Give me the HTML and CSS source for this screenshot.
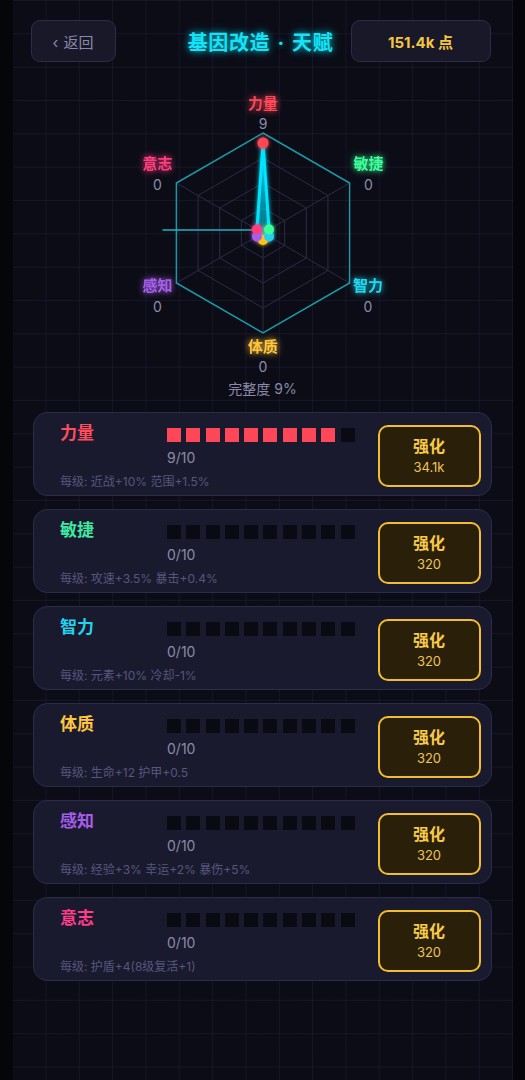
FILE: index.html
```html
<!DOCTYPE html>
<html lang="zh-CN">
<head>
  <meta charset="UTF-8" />
  <meta name="viewport" content="width=device-width, initial-scale=1.0"/>
  <title>基因改造 · 天赋</title>
  <link rel="stylesheet" href="styles.css">
</head>
<body>

  <div class="app">
    <header class="top">
      <button class="back"><span class="chev">‹</span> 返回</button>
      <h1 class="title">基因改造 · 天赋</h1>
      <div class="points">151.4k 点</div>
    </header>

    <svg class="radar" width="300" height="290" viewBox="0 0 300 290">
      <defs>
        <filter id="glow" x="-50%" y="-50%" width="200%" height="200%">
          <feGaussianBlur stdDeviation="2.2" result="b"/>
          <feMerge><feMergeNode in="b"/><feMergeNode in="SourceGraphic"/></feMerge>
        </filter>
        <filter id="soft" x="-50%" y="-50%" width="200%" height="200%">
          <feGaussianBlur stdDeviation="3" result="b"/>
          <feMerge><feMergeNode in="b"/><feMergeNode in="SourceGraphic"/></feMerge>
        </filter>
      </defs>

      <!-- rings -->
      <polygon class="ring" points="150,123 171.65,135.5 171.65,160.5 150,173 128.35,160.5 128.35,135.5"/>
      <polygon class="ring" points="150,98 193.3,123 193.3,173 150,198 106.7,173 106.7,123"/>
      <polygon class="ring" points="150,73 214.95,110.5 214.95,185.5 150,223 85.05,185.5 85.05,110.5"/>
      <line class="ring" x1="150" y1="148" x2="150" y2="48"/>
      <line class="ring" x1="150" y1="148" x2="236.6" y2="98"/>
      <line class="ring" x1="150" y1="148" x2="236.6" y2="198"/>
      <line class="ring" x1="150" y1="148" x2="150" y2="248"/>
      <line class="ring" x1="150" y1="148" x2="63.4" y2="198"/>
      <line class="ring" x1="150" y1="148" x2="63.4" y2="98"/>
      <polygon class="outer" points="150,48 236.6,98 236.6,198 150,248 63.4,198 63.4,98"/>

      <line class="stray" x1="49.5" y1="145" x2="144" y2="145"/>

      <polygon class="shape" filter="url(#glow)" points="150,58 156.06,144.5 156.06,151.5 150,155 143.94,151.5 143.94,144.5"/>

      <g filter="url(#glow)">
        <circle cx="150" cy="58" r="5.5" fill="#ff4757"/>
        <circle cx="150" cy="155" r="5" fill="#ffc312"/>
        <circle cx="143.94" cy="151.5" r="5" fill="#a55eea"/>
        <circle cx="156.06" cy="151.5" r="5" fill="#22d3ee"/>
        <circle cx="156.06" cy="144.5" r="5" fill="#3dff9a"/>
        <circle cx="143.94" cy="144.5" r="5" fill="#ff3d7f"/>
      </g>

      <g class="labels" filter="url(#soft)">
        <text x="150" y="18" class="str">力量</text>
        <text x="255.5" y="78" class="agi">敏捷</text>
        <text x="255" y="200" class="int">智力</text>
        <text x="150" y="261" class="con">体质</text>
        <text x="44.5" y="200" class="per">感知</text>
        <text x="44.5" y="78" class="wil">意志</text>
      </g>
      <g class="vals">
        <text x="150" y="38">9</text>
        <text x="255.5" y="99">0</text>
        <text x="255" y="221">0</text>
        <text x="150" y="281">0</text>
        <text x="44.5" y="221">0</text>
        <text x="44.5" y="99">0</text>
      </g>
    </svg>

    <div class="complete">完整度 9%</div>

    <div class="list">
      <div class="card">
        <div class="info">
          <div class="row">
            <span class="name str">力量</span>
            <div class="pips">
              <i class="on"></i><i class="on"></i><i class="on"></i><i class="on"></i><i class="on"></i>
              <i class="on"></i><i class="on"></i><i class="on"></i><i class="on"></i><i></i>
            </div>
          </div>
          <div class="count">9/10</div>
          <div class="desc">每级: 近战+10% 范围+1.5%</div>
        </div>
        <button class="up"><b>强化</b><span>34.1k</span></button>
      </div>

      <div class="card">
        <div class="info">
          <div class="row">
            <span class="name agi">敏捷</span>
            <div class="pips"><i></i><i></i><i></i><i></i><i></i><i></i><i></i><i></i><i></i><i></i></div>
          </div>
          <div class="count">0/10</div>
          <div class="desc">每级: 攻速+3.5% 暴击+0.4%</div>
        </div>
        <button class="up"><b>强化</b><span>320</span></button>
      </div>

      <div class="card">
        <div class="info">
          <div class="row">
            <span class="name int">智力</span>
            <div class="pips"><i></i><i></i><i></i><i></i><i></i><i></i><i></i><i></i><i></i><i></i></div>
          </div>
          <div class="count">0/10</div>
          <div class="desc">每级: 元素+10% 冷却-1%</div>
        </div>
        <button class="up"><b>强化</b><span>320</span></button>
      </div>

      <div class="card">
        <div class="info">
          <div class="row">
            <span class="name con">体质</span>
            <div class="pips"><i></i><i></i><i></i><i></i><i></i><i></i><i></i><i></i><i></i><i></i></div>
          </div>
          <div class="count">0/10</div>
          <div class="desc">每级: 生命+12 护甲+0.5</div>
        </div>
        <button class="up"><b>强化</b><span>320</span></button>
      </div>

      <div class="card">
        <div class="info">
          <div class="row">
            <span class="name per">感知</span>
            <div class="pips"><i></i><i></i><i></i><i></i><i></i><i></i><i></i><i></i><i></i><i></i></div>
          </div>
          <div class="count">0/10</div>
          <div class="desc">每级: 经验+3% 幸运+2% 暴伤+5%</div>
        </div>
        <button class="up"><b>强化</b><span>320</span></button>
      </div>

      <div class="card">
        <div class="info">
          <div class="row">
            <span class="name wil">意志</span>
            <div class="pips"><i></i><i></i><i></i><i></i><i></i><i></i><i></i><i></i><i></i><i></i></div>
          </div>
          <div class="count">0/10</div>
          <div class="desc">每级: 护盾+4(8级复活+1)</div>
        </div>
        <button class="up"><b>强化</b><span>320</span></button>
      </div>
    </div>
  </div>

</body>
</html>
```

FILE: styles.css
```css
body {
  margin: 0;
  background: #05050a;
  font-family: 'Inter', 'Noto Sans CJK SC', sans-serif;
  color: #8a8aa8;
}
.app {
  width: 500px;
  min-height: 1080px;
  margin: 0 auto;
  box-sizing: border-box;
  padding-top: 20px;
  background-color: #0c0c16;
  background-image:
    linear-gradient(to right, rgba(90,90,150,0.13) 1px, transparent 1px),
    linear-gradient(to bottom, rgba(90,90,150,0.13) 1px, transparent 1px);
  background-size: 33.33px 33.33px;
  background-position: 32.5px 0, 0 0;
}

/* header */
.top {
  display: grid;
  grid-template-columns: 1fr auto 1fr;
  align-items: center;
  padding: 0 22px 0 18px;
}
.back {
  justify-self: start;
  width: 85px;
  height: 42px;
  background: #181828;
  border: 1px solid #2c2c48;
  border-radius: 9px;
  color: #8888aa;
  font-family: inherit;
  font-size: 15px;
  cursor: pointer;
}
.chev {
  font-size: 15px;
  margin-right: 1px;
}
.title {
  margin: 0;
  font-size: 20px;
  font-weight: bold;
  color: #14e3f5;
  text-shadow: 0 0 6px rgba(0,229,255,0.7), 0 0 12px rgba(0,229,255,0.35);
  letter-spacing: 0.6px;
  word-spacing: 2px;
}
.points {
  justify-self: end;
  width: 140px;
  height: 42px;
  box-sizing: border-box;
  display: flex;
  align-items: center;
  justify-content: center;
  background: #181828;
  border: 1px solid #2c2c48;
  border-radius: 9px;
  color: #f5c542;
  font-size: 15px;
  font-weight: bold;
}

/* radar */
.radar {
  display: block;
  margin: 23px auto 0;
  overflow: visible;
}
.ring {
  fill: none;
  stroke: #2b2b4a;
  stroke-width: 1;
}
.outer {
  fill: none;
  stroke: #1b98a6;
  stroke-width: 1.5;
}
.stray {
  stroke: #1fb3c2;
  stroke-width: 1.5;
}
.shape {
  fill: rgba(0,229,255,0.25);
  stroke: #00e5ff;
  stroke-width: 3;
  stroke-linejoin: round;
}
.labels text {
  font-size: 15px;
  font-weight: bold;
  text-anchor: middle;
  dominant-baseline: central;
}
.vals text {
  font-size: 14px;
  fill: #8c8ca8;
  text-anchor: middle;
  dominant-baseline: central;
}
.labels .str { fill: #ff4757; }
.labels .agi { fill: #3dff9a; }
.labels .int { fill: #22d9f2; }
.labels .con { fill: #ffc53d; }
.labels .per { fill: #a55eea; }
.labels .wil { fill: #ff3d7f; }

.complete {
  text-align: center;
  font-size: 14px;
  line-height: 20px;
  margin-top: 4px;
  color: #8a8aa8;
}

/* cards */
.list {
  display: flex;
  flex-direction: column;
  gap: 13px;
  padding: 0 21px 0 20.5px;
  margin-top: 13px;
}
.card {
  display: flex;
  align-items: center;
  background: #1a1a2f;
  border: 1px solid #2b2b4a;
  border-radius: 14px;
  padding: 10px 10px 6px 26px;
}
.info {
  flex: 1;
  display: flex;
  flex-direction: column;
  align-self: flex-start;
}
.row {
  display: flex;
  align-items: center;
  height: 20px;
}
.name {
  width: 107px;
  font-size: 17px;
  font-weight: bold;
  line-height: 20px;
}
.name.str { color: #ff4d5e; }
.name.agi { color: #3ee8a0; }
.name.int { color: #22d3ee; }
.name.con { color: #ffc53d; }
.name.per { color: #a55eea; }
.name.wil { color: #ff3d8a; }

.pips {
  display: flex;
  gap: 5.3px;
  margin-top: 3px;
}
.pips i {
  width: 14px;
  height: 14px;
  background: #0a0a13;
}
.pips i.on {
  background: #ff4757;
}
.count {
  margin: 6px 0 0 107px;
  font-size: 14px;
  line-height: 18px;
  color: #8a8aa8;
}
.desc {
  margin-top: 8px;
  font-size: 12px;
  line-height: 14px;
  color: #56567c;
}
.up {
  width: 103px;
  height: 62px;
  display: flex;
  flex-direction: column;
  align-items: center;
  justify-content: center;
  background: #2a2009;
  border: 2px solid #f2bd2f;
  border-radius: 10px;
  color: #f7c948;
  font-family: inherit;
  cursor: pointer;
  padding: 0;
}
.up b {
  font-size: 16px;
  line-height: 22px;
}
.up span {
  font-size: 13px;
  line-height: 20px;
  color: #ecc45a;
}
```
